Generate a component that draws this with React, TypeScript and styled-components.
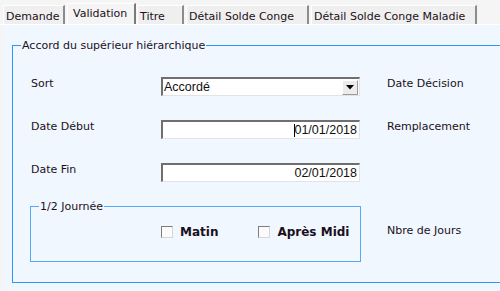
import styled, { createGlobalStyle } from "styled-components";

const GlobalStyle = createGlobalStyle`
  html, body {
    margin: 0;
    padding: 0;
    width: 500px;
    height: 291px;
    overflow: hidden;
    background: #f5f5f5;
    font-family: "DejaVu Sans", Verdana, sans-serif;
    font-size: 11px;
    color: #1c1020;
  }
`;

const Screen = styled.div`
  width: 500px;
  height: 291px;
  display: flex;
  flex-direction: column;
  overflow: hidden;
`;

const TabStrip = styled.div`
  height: 24px;
  display: flex;
  align-items: flex-end;
  padding-left: 3px;
  border-bottom: 1px solid #ffffff;
`;

const Tab = styled.div<{ $active?: boolean; $w: number }>`
  box-sizing: border-box;
  width: ${(p) => p.$w}px;
  height: ${(p) => (p.$active ? 21 : 19)}px;
  margin-right: ${(p) => (p.$active ? 1 : 2)}px;
  padding: ${(p) => (p.$active ? "3px 0 0 5px" : "4px 0 0 2px")};
  background: ${(p) => (p.$active ? "#f4f4f4" : "#efefef")};
  border-left: 1px solid #ffffff;
  border-top: 1px solid #ffffff;
  border-right: 2px solid ${(p) => (p.$active ? "#7a7a7a" : "#8c8c8c")};
  white-space: nowrap;
  line-height: 13px;
`;

const Panel = styled.div`
  flex: 1;
  margin-left: 3px;
  background: #f0f7ff;
  padding: 14px 0 0 9px;
  overflow: hidden;
`;

const Group = styled.fieldset`
  margin: 0;
  min-width: 0;
  width: 520px;
  height: 244px;
  box-sizing: border-box;
  border: 1px solid #2f95f7;
  padding: 0;
  legend {
    padding: 0 1px;
    margin-left: 8px;
    line-height: 13px;
  }
`;

const FormGrid = styled.div`
  display: grid;
  grid-template-columns: 131px 200px 26px auto;
  grid-template-rows: 19px 19px 19px auto;
  row-gap: 24px;
  align-items: start;
  padding: 25px 0 0 17px;
`;

const Label = styled.div<{ $col?: number }>`
  grid-column: ${(p) => p.$col ?? 1};
  padding: 0 0 0 ${(p) => (p.$col ? 0 : 1)}px;
  line-height: 13px;
  white-space: nowrap;
`;

const Inset = styled.div`
  grid-column: 2;
  box-sizing: border-box;
  height: 19px;
  width: 199px;
  background: #ffffff;
  border-top: 2px solid #6f6f6f;
  border-left: 2px solid #6f6f6f;
  border-bottom: 1px solid #e3e3e3;
  border-right: 1px solid #e3e3e3;
  display: flex;
  align-items: center;
  font-family: "Liberation Sans", Arial, sans-serif;
  font-size: 12.5px;
  color: #111;
`;

const SelectText = styled.span`
  flex: 1;
  padding-left: 1px;
`;

const DropButton = styled.span`
  box-sizing: border-box;
  width: 16px;
  height: 15px;
  margin-right: 1px;
  background: #ececec;
  border-top: 1px solid #ffffff;
  border-left: 1px solid #ffffff;
  border-right: 1px solid #9a9a9a;
  border-bottom: 1px solid #9a9a9a;
  display: flex;
  align-items: center;
  justify-content: center;
`;

const DateText = styled.span`
  flex: 1;
  padding-right: 2px;
  display: flex;
  justify-content: flex-end;
  align-items: center;
`;

const Caret = styled.span`
  width: 1px;
  height: 13px;
  background: #000;
  margin-right: -1px;
`;

const HalfDay = styled.fieldset`
  grid-column: 1 / span 2;
  margin: -6px 0 0 0;
  min-width: 0;
  width: 331px;
  height: 62px;
  box-sizing: border-box;
  border: 1px solid #55a9f7;
  padding: 0;
  legend {
    padding: 0 1px;
    margin-left: 8px;
    line-height: 13px;
  }
`;

const CheckRow = styled.div`
  display: flex;
  align-items: center;
  padding: 12px 0 0 130px;
`;

const Check = styled.label`
  display: flex;
  align-items: center;
  font-weight: bold;
  font-size: 12px;
  margin-right: 40px;
  white-space: nowrap;
`;

const Box = styled.span`
  box-sizing: border-box;
  width: 12px;
  height: 12px;
  margin-right: 7px;
  background: #fbfbfb;
  border-top: 1px solid #7d7d7d;
  border-left: 1px solid #7d7d7d;
  border-right: 1px solid #d6d6d6;
  border-bottom: 1px solid #d6d6d6;
`;

const SideLabel = styled.div`
  grid-column: 4;
  margin-top: 18px;
  line-height: 13px;
  white-space: nowrap;
`;

const tabs = [
  { label: "Demande", w: 62 },
  { label: "Validation", w: 69, active: true },
  { label: "Titre", w: 47 },
  { label: "Détail Solde Conge", w: 123 },
  { label: "Détail Solde Conge Maladie", w: 166 },
];

export default function App() {
  return (
    <Screen>
      <GlobalStyle />
      <TabStrip>
        {tabs.map((t) => (
          <Tab key={t.label} $w={t.w} $active={t.active}>
            {t.label}
          </Tab>
        ))}
      </TabStrip>
      <Panel>
        <Group>
          <legend>Accord du supérieur hiérarchique</legend>
          <FormGrid>
            <Label>Sort</Label>
            <Inset>
              <SelectText>Accordé</SelectText>
              <DropButton>
                <svg width="8" height="5" viewBox="0 0 8 5">
                  <path d="M0 0 H8 L4 4.5 Z" fill="#000" />
                </svg>
              </DropButton>
            </Inset>
            <Label $col={4}>Date Décision</Label>

            <Label>Date Début</Label>
            <Inset>
              <DateText>
                <Caret />
                01/01/2018
              </DateText>
            </Inset>
            <Label $col={4}>Remplacement</Label>

            <Label>Date Fin</Label>
            <Inset>
              <DateText>02/01/2018</DateText>
            </Inset>
            <div />

            <HalfDay>
              <legend>1/2 Journée</legend>
              <CheckRow>
                <Check>
                  <Box />
                  Matin
                </Check>
                <Check>
                  <Box />
                  Après Midi
                </Check>
              </CheckRow>
            </HalfDay>
            <SideLabel>Nbre de Jours</SideLabel>
          </FormGrid>
        </Group>
      </Panel>
    </Screen>
  );
}
